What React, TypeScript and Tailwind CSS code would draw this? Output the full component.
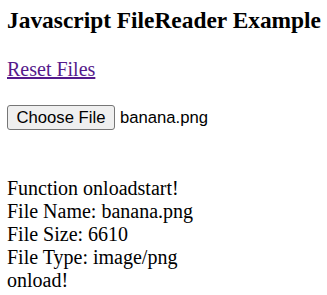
export default function App() {
  return (
    <div className="min-h-screen bg-white pl-[7px] pt-[7px] text-black font-['Liberation_Serif',serif]">
      <h3 className="text-[23.4px] font-bold leading-[27px]">
        Javascript FileReader Example
      </h3>

      <div className="mt-[24px] text-[20px] leading-[23px]">
        <a href="#" className="text-[#551a8b] underline">
          Reset Files
        </a>
      </div>

      {/* file input row */}
      <div className="mt-[24px] flex items-center h-[25px] font-['Liberation_Sans',Arial,sans-serif] text-[16.67px]">
        <button
          type="button"
          className="h-[25px] w-[108px] rounded-[3px] border border-[#767676] bg-[#efefef] text-black leading-[23px]"
        >
          Choose File
        </button>
        <span className="ml-[5px]">banana.png</span>
      </div>

      <div className="mt-[47px] text-[20px] leading-[23px]">
        <div>Function onloadstart!</div>
        <div>File Name: banana.png</div>
        <div>File Size: 6610</div>
        <div>File Type: image/png</div>
        <div>onload!</div>
      </div>
    </div>
  );
}
